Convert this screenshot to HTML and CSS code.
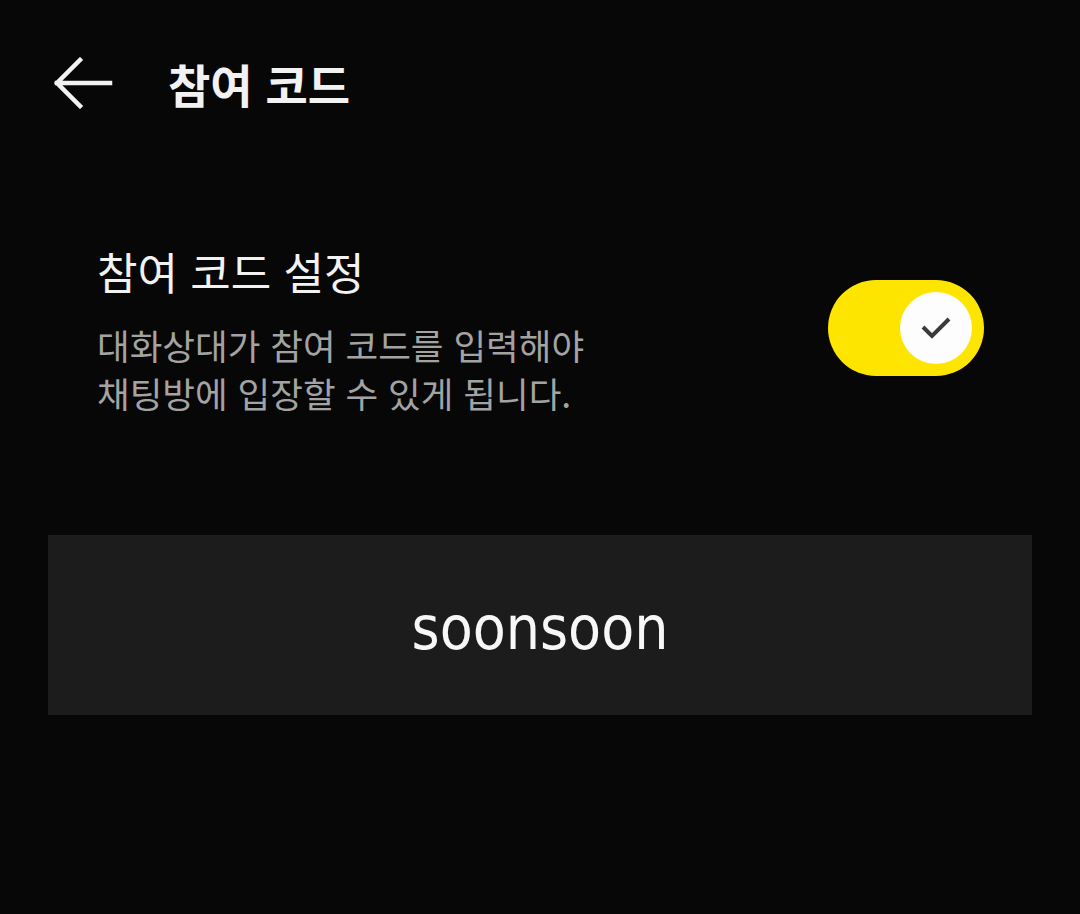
FILE: index.html
```html
<!DOCTYPE html>
<html lang="ko">
<head>
    <meta charset="UTF-8">
    <meta name="viewport" content="width=device-width, initial-scale=1.0">
    <title>참여 코드</title>
    <link rel="stylesheet" href="styles.css">
</head>
<body>

<div class="header">
    <button class="back-btn" type="button" aria-label="뒤로">
        <svg width="60" height="52" viewBox="0 0 60 52">
            <path d="M57 26H4M27 3L4 26l23 23" fill="none" stroke="#f2f2f2" stroke-width="4.5" stroke-linecap="square"/>
        </svg>
    </button>
    <h1 class="title">참여 코드</h1>
</div>

<div class="setting-row">
    <div class="setting-text">
        <h2>참여 코드 설정</h2>
        <p>대화상대가 참여 코드를 입력해야<br>채팅방에 입장할 수 있게 됩니다.</p>
    </div>
    <div class="toggle on">
        <div class="knob">
            <svg width="32" height="24" viewBox="0 0 32 24">
                <path d="M3 11l9 9L29 3" fill="none" stroke="#3a3a3a" stroke-width="4"/>
            </svg>
        </div>
    </div>
</div>

<div class="code-box">soonsoon</div>

</body>
</html>
```

FILE: styles.css
```css
body {
    margin: 0;
    background-color: #070707;
    color: #f2f2f2;
    font-family: "Noto Sans CJK KR", "Noto Sans", sans-serif;
    width: 1080px;
    height: 914px;
    overflow: hidden;
}

.header {
    display: flex;
    align-items: center;
    height: 166px;
    padding-left: 53px;
}

.back-btn {
    background: none;
    border: none;
    padding: 0;
    width: 60px;
    height: 52px;
    cursor: pointer;
}

.title {
    margin: 0 0 0 55px;
    font-size: 46px;
    font-weight: 700;
    line-height: 60px;
}

.setting-row {
    display: flex;
    justify-content: space-between;
    align-items: flex-start;
    padding: 75px 96px 0 97px;
}

.setting-text h2 {
    margin: 0 0 20px 0;
    font-size: 44px;
    font-weight: 400;
    line-height: 60px;
}

.setting-text p {
    margin: 0;
    font-size: 35.5px;
    line-height: 48px;
    color: #a3a3a3;
}

.toggle {
    width: 156px;
    height: 96px;
    border-radius: 48px;
    background-color: #fee500;
    display: flex;
    align-items: center;
    justify-content: flex-end;
    padding-right: 12px;
    box-sizing: border-box;
    margin-top: 39px;
}

.knob {
    width: 72px;
    height: 72px;
    border-radius: 50%;
    background-color: #fdfdfd;
    display: flex;
    align-items: center;
    justify-content: center;
}

.code-box {
    margin: 118px 48px 0 48px;
    height: 180px;
    padding-top: 6px;
    box-sizing: border-box;
    background-color: #1c1c1c;
    display: flex;
    align-items: center;
    justify-content: center;
    font-family: "DejaVu Sans Condensed", "DejaVu Sans", sans-serif;
    font-stretch: condensed;
    font-size: 60px;
    color: #f7f7f7;
}
```
